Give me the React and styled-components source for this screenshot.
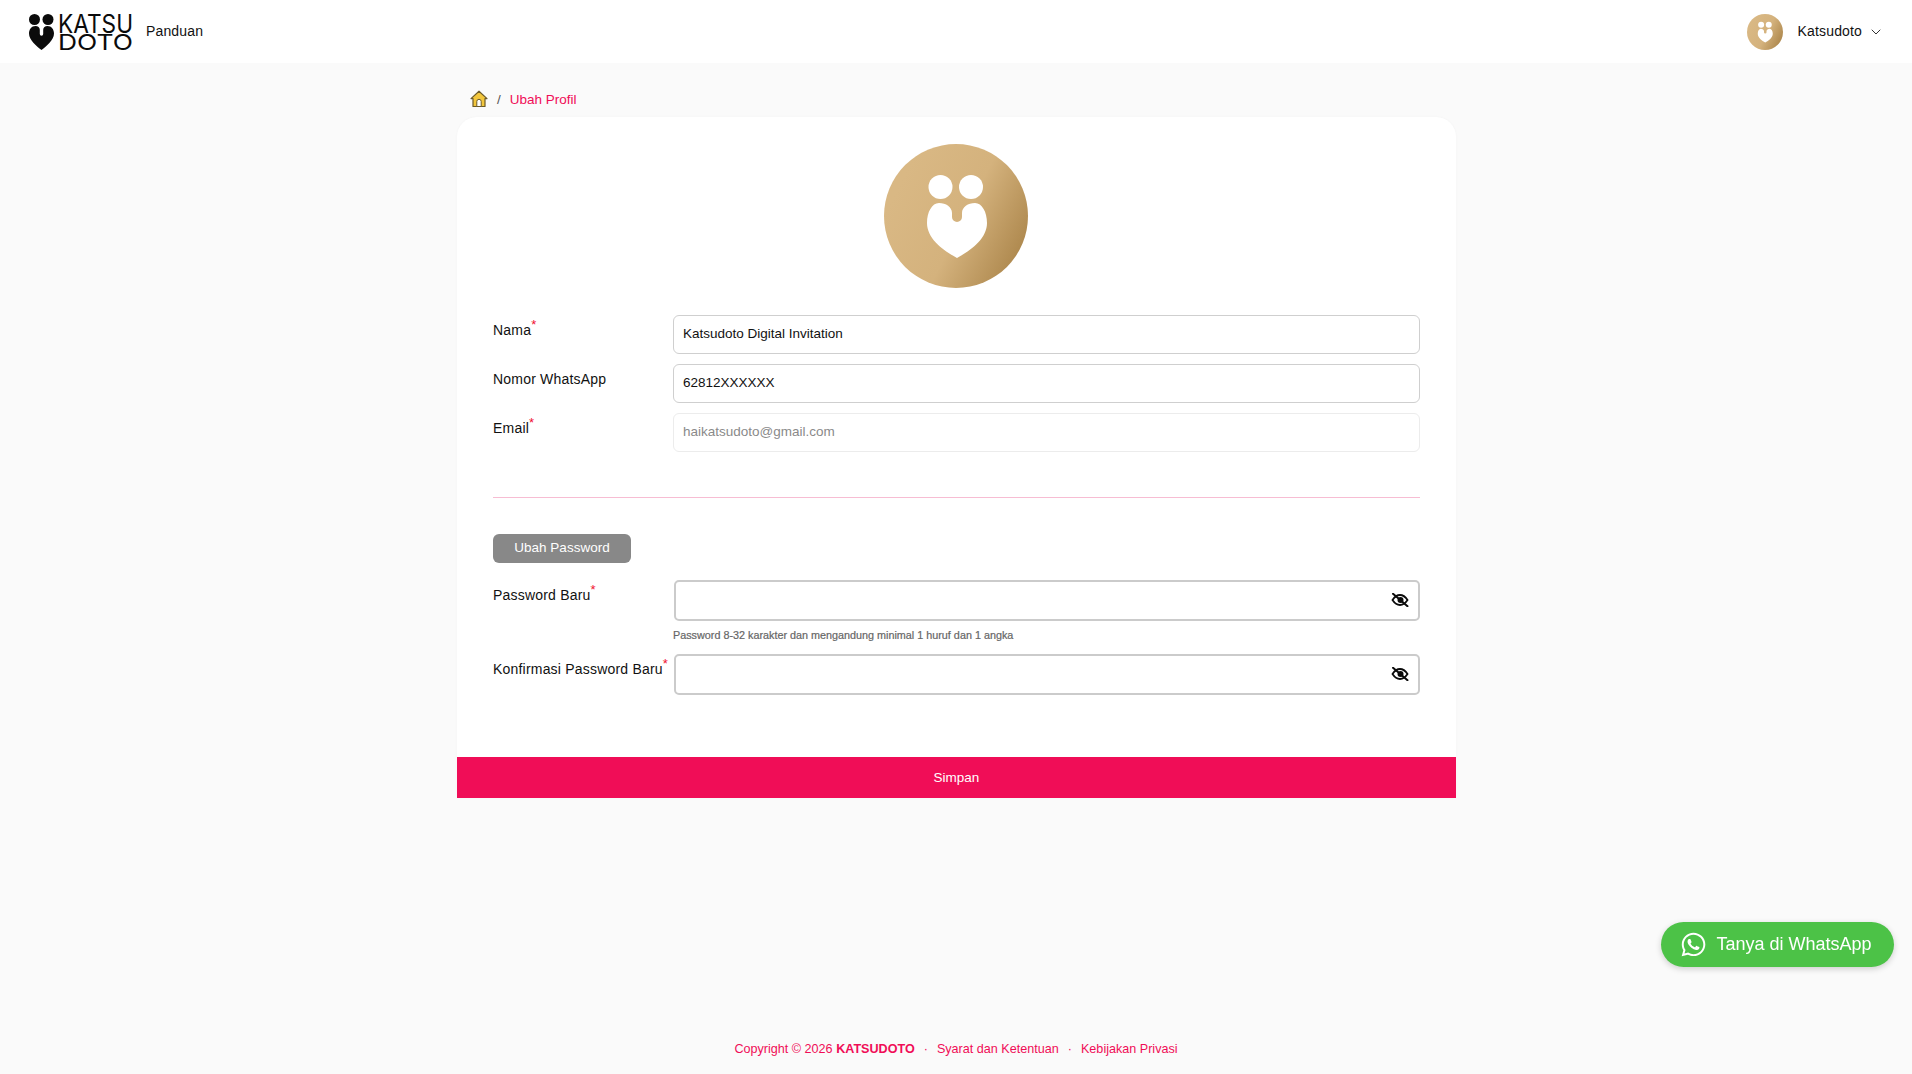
import React from "react";
import styled, { createGlobalStyle } from "styled-components";
import { FaWhatsapp } from "react-icons/fa";
import { FiChevronDown } from "react-icons/fi";

const GlobalStyle = createGlobalStyle`
  * { box-sizing: border-box; }
  html, body { margin: 0; padding: 0; }
  body {
    background: #fafafa;
    font-family: "Liberation Sans", Arial, sans-serif;
    color: #111;
  }
  svg { display: block; }
`;

const Page = styled.div`
  min-height: 1074px;
  display: flex;
  flex-direction: column;
`;

const Header = styled.header`
  height: 63px;
  background: #fff;
  display: flex;
  align-items: center;
  justify-content: space-between;
  padding: 0 29px;
`;
const HeaderLeft = styled.div`
  display: flex;
  align-items: center;
  gap: 12px;
`;
const NavLink = styled.span`
  font-size: 14px;
  letter-spacing: 0.15px;
  padding-bottom: 2px;
`;
const UserMenu = styled.div`
  display: flex;
  align-items: center;
  margin-right: -1px;
`;
const UserName = styled.span`
  font-size: 14px;
  letter-spacing: 0.15px;
  margin-left: 15px;
  margin-right: 6px;
  padding-bottom: 2px;
`;

const Main = styled.main`
  width: 999px;
  margin-left: 457px;
  flex: 1;
`;
const Breadcrumb = styled.nav`
  height: 54px;
  padding: 27px 0 0 13px;
  display: flex;
  align-items: flex-start;
  font-size: 13.5px;
  gap: 9px;
  line-height: 18px;
`;
const Sep = styled.span`
  color: #555;
  margin-top: 1px;
`;
const Crumb = styled.span`
  color: #f00d57;
  margin-top: 1px;
`;

const Card = styled.section`
  background: #fff;
  border-radius: 20px 20px 0 0;
  box-shadow: 0 0 3px rgba(0, 0, 0, 0.03);
`;
const CardBody = styled.div`
  padding: 27px 36px 62px;
`;
const AvatarRow = styled.div`
  display: flex;
  justify-content: center;
  padding-right: 1px;
  margin-bottom: 27px;
`;
const Row = styled.div`
  display: grid;
  grid-template-columns: ${(p) => p.$label || "180px"} 1fr;
  margin-top: ${(p) => p.$top || "0"};
  margin-bottom: ${(p) => p.$gap || "10px"};
  align-items: start;
`;
const Label = styled.label`
  font-size: 14px;
  letter-spacing: 0.2px;
  line-height: 16px;
  padding-top: 7px;
  white-space: nowrap;
  sup {
    color: #f01030;
    font-size: 13px;
    line-height: 0;
  }
`;
const Input = styled.input`
  width: 100%;
  height: 39px;
  border: 1.5px solid #cfcfcf;
  border-radius: 6px;
  padding: 0 9px 3px;
  font: 13.5px "Liberation Sans", Arial, sans-serif;
  color: #111;
  background: #fff;
  outline: none;
  &:disabled {
    border: 1.5px solid #ececec;
    color: #8a8a8a;
    -webkit-text-fill-color: #8a8a8a;
    opacity: 1;
  }
`;
const Divider = styled.hr`
  border: 0;
  border-top: 1px solid #f7bdd3;
  margin: 45px 0 36px;
`;
const GreyButton = styled.button`
  display: block;
  width: 138px;
  height: 29px;
  border: 0;
  border-radius: 6px;
  background: #888;
  color: #fff;
  font: 13.5px "Liberation Sans", Arial, sans-serif;
  padding: 0 0 2px;
  margin-bottom: 17px;
`;
const PassWrap = styled.div`
  position: relative;
  height: 41px;
`;
const PassInput = styled.input`
  width: 100%;
  height: 41px;
  border: 2px solid #cbcbcb;
  border-radius: 5px;
  background: #fff;
  padding: 0 40px 0 9px;
  outline: none;
`;
const EyeButton = styled.span`
  position: absolute;
  right: 11px;
  top: 13px;
  display: flex;
  color: #0a0a0a;
`;
const Hint = styled.div`
  font-size: 10.8px;
  color: #666;
  line-height: 12px;
  margin-top: 8px;
  margin-left: -1px;
  -webkit-text-stroke: 0.2px #666;
`;
const SaveButton = styled.button`
  display: block;
  width: 100%;
  height: 41px;
  border: 0;
  padding: 0 0 1px;
  background: #f00d57;
  color: #fff;
  font: 13.5px "Liberation Sans", Arial, sans-serif;
`;

const Footer = styled.footer`
  height: 33px;
  display: flex;
  justify-content: center;
  gap: 9px;
  color: #f00d57;
  font-size: 12.6px;
  line-height: 16px;
  b {
    font-weight: 700;
  }
`;

const WhatsAppButton = styled.a`
  position: fixed;
  right: 18px;
  bottom: 107px;
  height: 45px;
  width: 233px;
  padding-right: 3px;
  border-radius: 23px;
  background: #4cc247;
  color: #fff;
  font-size: 18px;
  display: flex;
  align-items: center;
  justify-content: center;
  gap: 9px;
  box-shadow: 0 2px 6px rgba(0, 0, 0, 0.18);
`;

const LogoSvg = styled.svg`
  overflow: visible;
`;

const Logo = () => (
  <LogoSvg width="105" height="38" viewBox="0 0 105 38">
    <g fill="#0b0b0b">
      <circle cx="5.5" cy="6.5" r="5.5" />
      <circle cx="19" cy="6.5" r="5.5" />
      <path d="M6.5 13 C2.5 13 0 16.5 0 20.5 C0 27 7.5 33 12.5 37 C17.5 33 25 27 25 20.5 C25 16.5 22.5 13 18.5 13 C16 13 14.2 14.7 14.2 16.7 L14.2 21 A1.7 1.7 0 0 1 10.8 21 L10.8 16.7 C10.8 14.7 9 13 6.5 13 Z" />
    </g>
    <g fill="#0b0b0b" fontFamily="Inter, sans-serif" fontWeight="400">
      <text x="29" y="19.5" fontSize="25" textLength="75" lengthAdjust="spacingAndGlyphs">
        KATSU
      </text>
      <text x="29" y="36.5" fontSize="22" textLength="75" lengthAdjust="spacingAndGlyphs">
        DOTO
      </text>
    </g>
  </LogoSvg>
);

const Avatar = ({ size, id }) => (
  <svg width={size} height={size} viewBox="0 0 144 144">
    <defs>
      <linearGradient id={id} x1="0.1" y1="0.3" x2="1" y2="0.75">
        <stop offset="0" stopColor="#d9b884" />
        <stop offset="0.5" stopColor="#d4b27d" />
        <stop offset="1" stopColor="#ab854a" />
      </linearGradient>
    </defs>
    <circle cx="72" cy="72" r="72" fill={`url(#${id})`} />
    <g fill="#fff">
      <circle cx="56.5" cy="43" r="12" />
      <circle cx="87" cy="43" r="12" />
      <path d="M55 59 C48 59 43 68 43 79 C43 95 60 107 73 114 C86 107 103 95 103 79 C103 68 98 59 91 59 C84 59 78 63 78 69 L78 73 A5 5 0 0 1 68 73 L68 69 C68 63 62 59 55 59 Z" />
    </g>
  </svg>
);

const HomeIcon = () => (
  <svg width="18" height="18" viewBox="0 0 18 18">
    <path d="M9 1.2 L17 8.6 L15 8.6 L15 16.5 L3 16.5 L3 8.6 L1 8.6 Z" fill="#f2c63c" stroke="#6b5a2a" strokeWidth="1.2" strokeLinejoin="round" />
    <path d="M6.8 16.5 L6.8 11.5 A 2.2 2.2 0 0 1 11.2 11.5 L11.2 16.5 Z" fill="#fff" stroke="#6b5a2a" strokeWidth="1" />
  </svg>
);

const EyeOff = () => (
  <svg width="18" height="14" viewBox="0 0 18 14">
    <path d="M1.5 7 C4 3.2 6.8 2 9 2 C11.2 2 14 3.2 16.5 7 C14 10.8 11.2 12 9 12 C6.8 12 4 10.8 1.5 7 Z" fill="none" stroke="#0a0a0a" strokeWidth="1.8" />
    <circle cx="9.5" cy="7" r="3" fill="#0a0a0a" />
    <path d="M2 0.8 L16.5 13.2" stroke="#0a0a0a" strokeWidth="2" strokeLinecap="round" />
  </svg>
);

const Req = () => <sup>*</sup>;

const App = () => {
  return (
    <Page>
      <GlobalStyle />
      <Header>
        <HeaderLeft>
          <Logo />
          <NavLink>Panduan</NavLink>
        </HeaderLeft>
        <UserMenu>
          <Avatar size={36} id="avatar-sm" />
          <UserName>Katsudoto</UserName>
          <FiChevronDown size={16} color="#333" strokeWidth={1.5} />
        </UserMenu>
      </Header>
      <Main>
        <Breadcrumb>
          <HomeIcon />
          <Sep>/</Sep>
          <Crumb>Ubah Profil</Crumb>
        </Breadcrumb>
        <Card>
          <CardBody>
            <AvatarRow>
              <Avatar size={144} id="avatar-lg" />
            </AvatarRow>
            <Row>
              <Label>
                Nama
                <Req />
              </Label>
              <Input defaultValue="Katsudoto Digital Invitation" />
            </Row>
            <Row>
              <Label>Nomor WhatsApp</Label>
              <Input defaultValue="62812XXXXXX" />
            </Row>
            <Row>
              <Label>
                Email
                <Req />
              </Label>
              <Input disabled defaultValue="haikatsudoto@gmail.com" />
            </Row>
            <Divider />
            <GreyButton type="button">Ubah Password</GreyButton>
            <Row $label="181px" $gap="0">
              <Label>
                Password Baru
                <Req />
              </Label>
              <div>
                <PassWrap>
                  <PassInput type="password" />
                  <EyeButton>
                    <EyeOff />
                  </EyeButton>
                </PassWrap>
                <Hint>Password 8-32 karakter dan mengandung minimal 1 huruf dan 1 angka</Hint>
              </div>
            </Row>
            <Row $label="181px" $gap="0" $top="13px">
              <Label>
                Konfirmasi Password Baru
                <Req />
              </Label>
              <PassWrap>
                <PassInput type="password" />
                <EyeButton>
                  <EyeOff />
                </EyeButton>
              </PassWrap>
            </Row>
          </CardBody>
          <SaveButton type="button">Simpan</SaveButton>
        </Card>
      </Main>
      <Footer>
        <span>
          Copyright © 2026 <b>KATSUDOTO</b>
        </span>
        <span>·</span>
        <span>Syarat dan Ketentuan</span>
        <span>·</span>
        <span>Kebijakan Privasi</span>
      </Footer>
      <WhatsAppButton>
        <FaWhatsapp size={27} />
        Tanya di WhatsApp
      </WhatsAppButton>
    </Page>
  );
};

export default App;
